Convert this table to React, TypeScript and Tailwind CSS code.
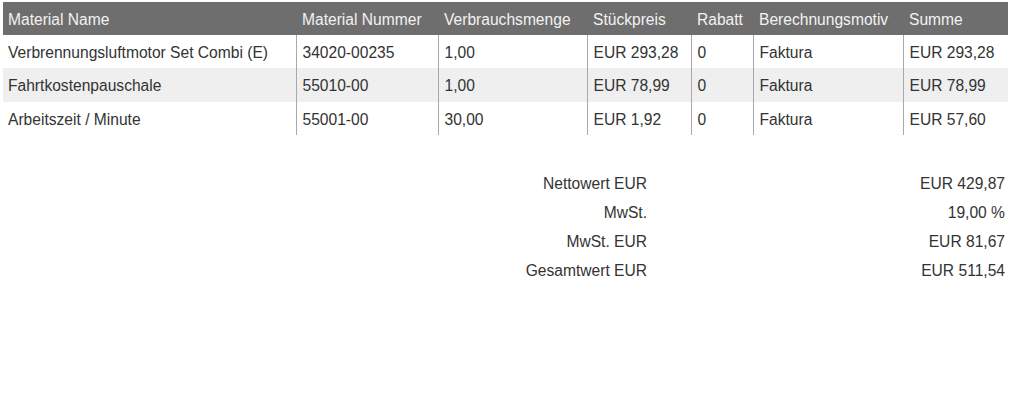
const columns = [
  { label: 'Material Name', width: 'w-[293px]' },
  { label: 'Material Nummer', width: 'w-[142px]' },
  { label: 'Verbrauchsmenge', width: 'w-[149px]' },
  { label: 'Stückpreis', width: 'w-[104px]' },
  { label: 'Rabatt', width: 'w-[62px]' },
  { label: 'Berechnungsmotiv', width: 'w-[150px]' },
  { label: 'Summe', width: 'w-[105px]' },
];

const rows = [
  ['Verbrennungsluftmotor Set Combi (E)', '34020-00235', '1,00', 'EUR 293,28', '0', 'Faktura', 'EUR 293,28'],
  ['Fahrtkostenpauschale', '55010-00', '1,00', 'EUR 78,99', '0', 'Faktura', 'EUR 78,99'],
  ['Arbeitszeit / Minute', '55001-00', '30,00', 'EUR 1,92', '0', 'Faktura', 'EUR 57,60'],
];

const totals = [
  ['Nettowert EUR', 'EUR 429,87'],
  ['MwSt.', '19,00 %'],
  ['MwSt. EUR', 'EUR 81,67'],
  ['Gesamtwert EUR', 'EUR 511,54'],
];

export default function App() {
  return (
    <div
      className="w-[1024px] h-[406px] bg-white text-[#333333] text-[15.6px] pt-[2px] pl-[3px]"
      style={{ fontFamily: '"Liberation Sans", Arial, sans-serif' }}
    >
      <table className="table-fixed border-collapse w-[1005px]">
        <colgroup>
          {columns.map((c) => (
            <col key={c.label} className={c.width} />
          ))}
        </colgroup>
        <thead>
          <tr className="bg-[#6e6e6e] h-[33px]">
            {columns.map((c, i) => (
              <th
                key={c.label}
                className={
                  'text-left font-normal text-[#f2f2f2] whitespace-nowrap p-0 pt-[2px] ' +
                  (i === 0 ? 'pl-[5px]' : 'pl-[6px]')
                }
              >
                {c.label}
              </th>
            ))}
          </tr>
        </thead>
        <tbody>
          {rows.map((row, r) => (
            <tr
              key={r}
              className={r === 1 ? 'bg-[#efefef] h-[34px]' : 'bg-white h-[33px]'}
            >
              {row.map((cell, i) => (
                <td
                  key={i}
                  className={
                    'whitespace-nowrap p-0 pt-[2px] ' +
                    (i === 0 ? 'pl-[5px]' : 'pl-[6px] border-l border-[#a8a8a8]')
                  }
                >
                  {cell}
                </td>
              ))}
            </tr>
          ))}
        </tbody>
      </table>

      <div className="mt-[34px] w-[1005px]">
        {totals.map(([label, value]) => (
          <div key={label} className="flex h-[29px] items-center">
            <div className="w-[644px] text-right">{label}</div>
            <div className="flex-1 text-right pr-[3px]">{value}</div>
          </div>
        ))}
      </div>
    </div>
  );
}
